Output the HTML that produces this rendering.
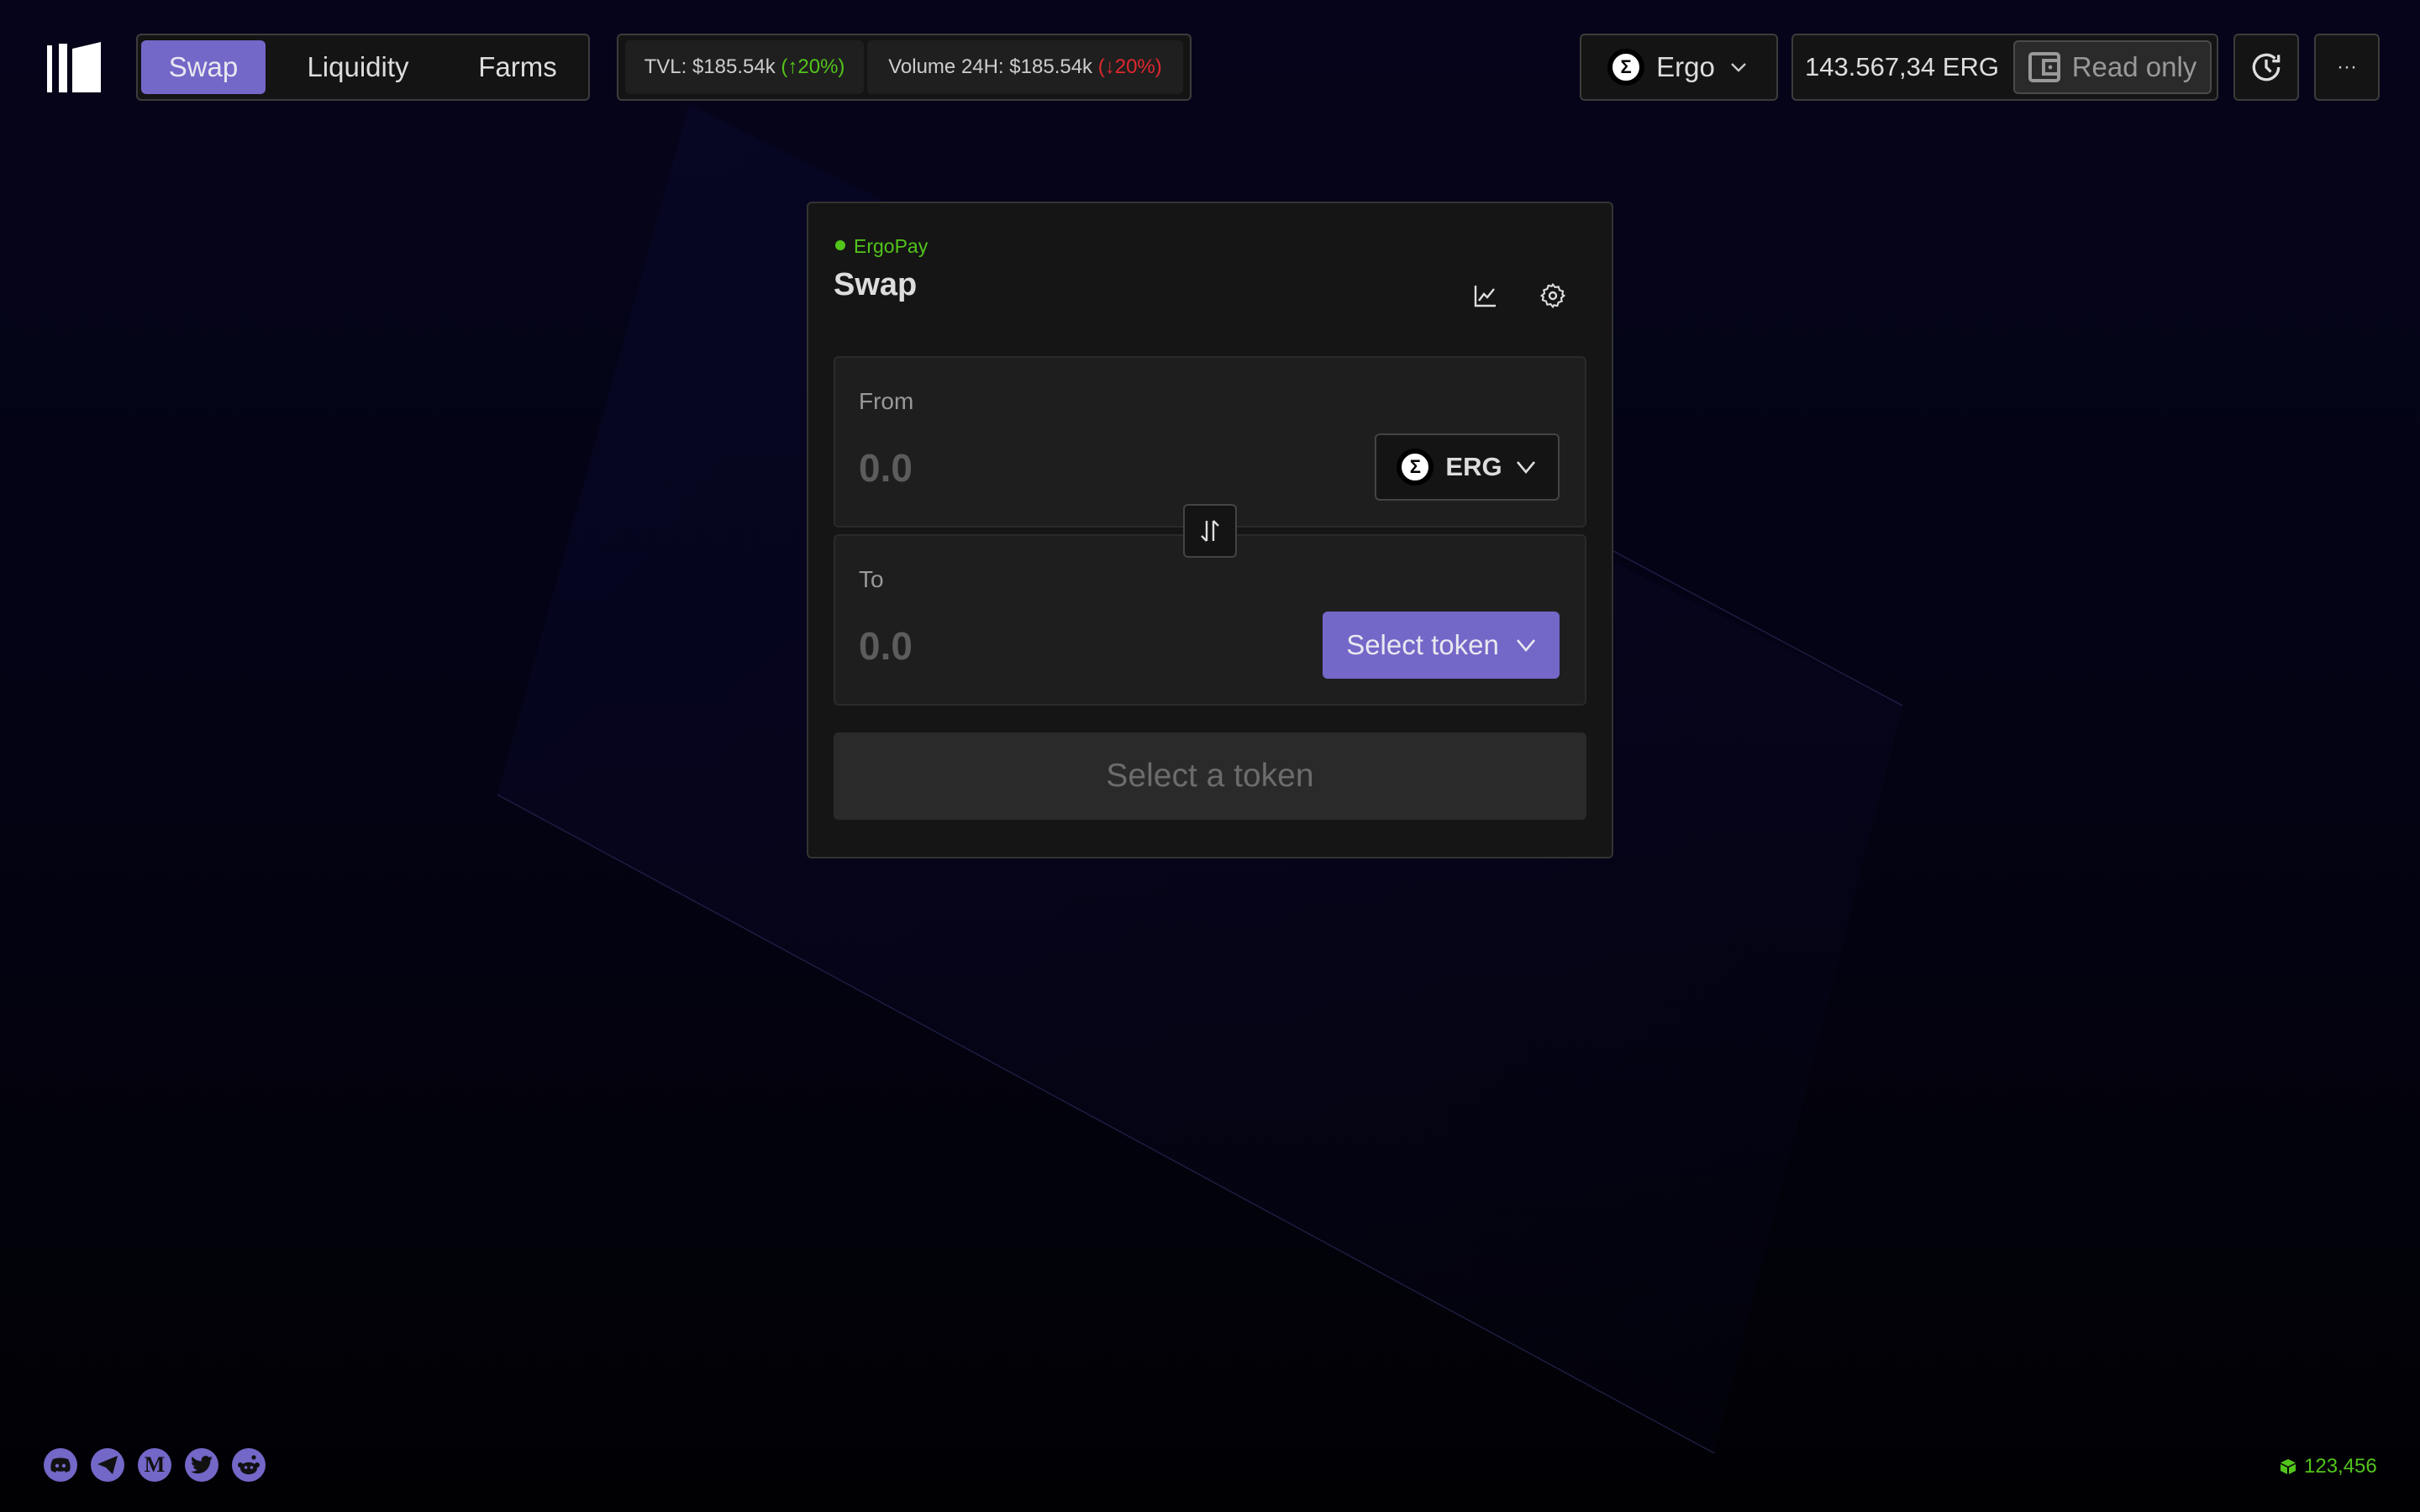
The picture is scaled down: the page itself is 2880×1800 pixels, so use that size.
<!DOCTYPE html>
<html><head><meta charset="utf-8"><style>
*{box-sizing:border-box;margin:0;padding:0}
html,body{width:2880px;height:1800px;overflow:hidden;background:#000}
#r{width:1440px;height:900px;zoom:2;position:relative;font-family:"Liberation Sans",sans-serif;color:#ddd;background:linear-gradient(180deg,#05041a 0%,#040314 50%,#010104 100%);overflow:hidden}
.a{position:absolute}
.box{position:absolute;background:#141414;border:1px solid #3c3c3c;border-radius:3px}
.c{display:flex;align-items:center;justify-content:center}
</style></head><body><div id="r">
<svg class="a" style="left:0;top:0" width="1440" height="900">
<defs><linearGradient id="g" x1="0" y1="0" x2="1" y2="1"><stop offset="0" stop-color="#0c0a38" stop-opacity=".35"/><stop offset="1" stop-color="#0a0a2a" stop-opacity=".12"/></linearGradient></defs>
<polygon points="296,473 410,62 1132,420 1020,865" fill="url(#g)"/>
<line x1="296" y1="473" x2="1020" y2="865" stroke="#1e1e44" stroke-width="0.7"/>
<line x1="960" y1="328" x2="1132" y2="420" stroke="#1e1e44" stroke-width="0.7"/>
</svg>
<svg class="a" style="left:28px;top:25px" width="32" height="31"><rect x="0" y="2" width="3" height="28" fill="#fff"/><rect x="7" y="1" width="5" height="29" fill="#fff"/><polygon points="15,4 32,0 32,30 15,30" fill="#fff"/></svg>
<div class="box" style="left:81px;top:20px;width:270px;height:40px"></div>
<div class="a c" style="left:84px;top:24px;width:74px;height:32px;background:#7367c8;border-radius:3px;font-size:16.5px;color:#e8e8f0">Swap</div>
<div class="a c" style="left:173px;top:24px;width:80px;height:32px;font-size:16.5px;color:#ddd">Liquidity</div>
<div class="a c" style="left:272px;top:24px;width:72px;height:32px;font-size:16.5px;color:#ddd">Farms</div>
<div class="box" style="left:367px;top:20px;width:342px;height:40px"></div>
<div class="a c" style="left:372px;top:24px;width:142px;height:32px;background:#1f1f1f;border-radius:3px;font-size:12px;color:#ccc">TVL: $185.54k&nbsp;<span style="color:#52c41a">(↑20%)</span></div>
<div class="a c" style="left:516px;top:24px;width:188px;height:32px;background:#1f1f1f;border-radius:3px;font-size:12px;color:#ccc">Volume 24H: $185.54k&nbsp;<span style="color:#e0282e">(↓20%)</span></div>
<div class="box c" style="left:940px;top:20px;width:118px;height:40px;font-size:16.5px;color:#ddd;gap:8px">
<span class="c" style="width:20px;height:20px;border-radius:50%;background:#fff;border:2px solid #000;box-shadow:0 0 0 1px #000;color:#000;font-size:11px;font-weight:bold">Σ</span>Ergo<svg width="12" height="8"><path d="M2 2l4 4 4-4" stroke="#ccc" fill="none" stroke-width="1.2"/></svg></div>
<div class="box" style="left:1066px;top:20px;width:254px;height:40px"></div>
<div class="a" style="left:1074px;top:31px;font-size:15.5px;color:#ddd">143.567,34 ERG</div>
<div class="a c" style="left:1198px;top:24px;width:118px;height:32px;background:#2a2a2a;border:1px solid #4a4a4a;border-radius:3px;font-size:16.5px;color:#999;gap:6px">
<svg width="20" height="18"><rect x="1" y="1" width="17" height="16" rx="1.5" fill="none" stroke="#999" stroke-width="2"/><rect x="9" y="5" width="9" height="8" fill="none" stroke="#999" stroke-width="2"/><circle cx="13" cy="9" r="1.2" fill="#999"/></svg>Read only</div>
<div class="box c" style="left:1329px;top:20px;width:39px;height:40px"><svg width="22" height="22" viewBox="0 0 24 24"><path d="M20 12a8 8 0 1 1-2.3-5.6M20 4v4h-4M12 7v5l3 3" stroke="#ddd" stroke-width="1.8" fill="none"/></svg></div>
<div class="box c" style="left:1377px;top:20px;width:39px;height:40px;font-size:12px;color:#ccc">···</div>
<div class="a" style="left:480px;top:120px;width:480px;height:391px;background:#151515;border:1px solid #333;border-radius:3px"></div>
<div class="a" style="left:497px;top:143px;width:6px;height:6px;border-radius:50%;background:#52c41a"></div>
<div class="a" style="left:508px;top:140px;font-size:11.5px;color:#52c41a">ErgoPay</div>
<div class="a" style="left:496px;top:159px;font-size:19px;font-weight:bold;color:#ddd">Swap</div>
<svg class="a" style="left:877px;top:169px" width="14" height="14"><path d="M1 1v12h12M3 10l3-4 2 2 4-5" stroke="#ddd" stroke-width="1.2" fill="none"/></svg>
<svg class="a" style="left:916px;top:168px" width="16" height="16" viewBox="0 0 24 24"><circle cx="12" cy="12" r="3" stroke="#ddd" stroke-width="1.8" fill="none"/><path d="M12 2l2 2.5 3-.5 1 3 3 1-.5 3L22 12l-2.5 2 .5 3-3 1-1 3-3-.5L12 22l-2-2.5-3 .5-1-3-3-1 .5-3L2 12l2.5-2-.5-3 3-1 1-3 3 .5z" stroke="#ddd" stroke-width="1.6" fill="none"/></svg>
<div class="a" style="left:496px;top:212px;width:448px;height:102px;background:#1e1e1e;border:1px solid #2a2a2a;border-radius:3px"></div>
<div class="a" style="left:496px;top:318px;width:448px;height:102px;background:#1e1e1e;border:1px solid #2a2a2a;border-radius:3px"></div>
<div class="a" style="left:511px;top:231px;font-size:14px;color:#999">From</div>
<div class="a" style="left:511px;top:265px;font-size:23px;font-weight:bold;color:#5c5c5c">0.0</div>
<div class="a" style="left:511px;top:337px;font-size:14px;color:#999">To</div>
<div class="a" style="left:511px;top:371px;font-size:23px;font-weight:bold;color:#5c5c5c">0.0</div>
<div class="a c" style="left:818px;top:258px;width:110px;height:40px;background:#141414;border:1px solid #444;border-radius:3px;gap:8px;font-size:15.5px;font-weight:bold;color:#ddd">
<span class="c" style="width:20px;height:20px;border-radius:50%;background:#fff;border:2px solid #000;box-shadow:0 0 0 1px #000;color:#000;font-size:11px">Σ</span>ERG<svg width="12" height="8"><path d="M1 1l5 6 5-6" stroke="#ddd" fill="none" stroke-width="1.3"/></svg></div>
<div class="a c" style="left:704px;top:300px;width:32px;height:32px;background:#141414;border:1px solid #444;border-radius:3px"><svg width="14" height="14"><path d="M5 1v12M2 10l3 3M9 13V1M12 4L9 1" stroke="#ddd" stroke-width="1.2" fill="none"/></svg></div>
<div class="a c" style="left:787px;top:364px;width:141px;height:40px;background:#7367c8;border-radius:3px;gap:10px;font-size:16.5px;color:#e8e8f0">Select token<svg width="12" height="8"><path d="M1 1l5 6 5-6" stroke="#e8e8f0" fill="none" stroke-width="1.3"/></svg></div>
<div class="a c" style="left:496px;top:436px;width:448px;height:52px;background:#2a2a2a;border-radius:3px;font-size:19.5px;color:#6c6c6c">Select a token</div>
<div class="a" style="left:26px;top:862px;display:flex;gap:8px">
<span class="c" style="width:20px;height:20px;border-radius:50%;background:#7367c8"><svg width="13" height="10"><path d="M2 1.5Q6.5 0 11 1.5Q13 5 12 8.5L9.5 9.5 9 8.5Q6.5 9.3 4 8.5L3.5 9.5 1 8.5Q0 5 2 1.5z" fill="#111"/><circle cx="4.5" cy="5.5" r="1.1" fill="#7367c8"/><circle cx="8.5" cy="5.5" r="1.1" fill="#7367c8"/></svg></span>
<span class="c" style="width:20px;height:20px;border-radius:50%;background:#7367c8"><svg width="12" height="11"><path d="M0 5L12 0 9 11 5 7z" fill="#111"/></svg></span>
<span class="c" style="width:20px;height:20px;border-radius:50%;background:#7367c8;font-family:'Liberation Serif',serif;font-weight:bold;font-size:13px;color:#111">M</span>
<span class="c" style="width:20px;height:20px;border-radius:50%;background:#7367c8"><svg width="13" height="11" viewBox="0 0 24 20"><path d="M24 2.3a10 10 0 0 1-2.8.8 5 5 0 0 0 2.1-2.7 10 10 0 0 1-3.1 1.2A4.9 4.9 0 0 0 11.8 6 14 14 0 0 1 1.7.9a4.9 4.9 0 0 0 1.5 6.6A4.9 4.9 0 0 1 1 6.9a4.9 4.9 0 0 0 3.9 4.8 5 5 0 0 1-2.2.1 4.9 4.9 0 0 0 4.6 3.4A9.9 9.9 0 0 1 0 17.2 14 14 0 0 0 7.5 19.4c9.1 0 14-7.5 14-14v-.6A10 10 0 0 0 24 2.3z" fill="#111"/></svg></span>
<span class="c" style="width:20px;height:20px;border-radius:50%;background:#7367c8"><svg width="14" height="12"><ellipse cx="7" cy="8" rx="5" ry="3.6" fill="#111"/><circle cx="2" cy="6" r="1.5" fill="#111"/><circle cx="12" cy="6" r="1.5" fill="#111"/><circle cx="10" cy="1.5" r="1.3" fill="#111"/><circle cx="5.3" cy="7.5" r=".9" fill="#7367c8"/><circle cx="8.7" cy="7.5" r=".9" fill="#7367c8"/></svg></span>
</div>
<div class="a" style="left:1357px;top:866px;font-size:12px;color:#52c41a;display:flex;align-items:center;gap:5px"><svg width="9" height="9"><path d="M4.5 0L9 2.2 4.5 4.4 0 2.2z M0 3v4l4 2V5z M9 3v4L5 9V5z" fill="#52c41a"/></svg>123,456</div>
</div></body></html>
